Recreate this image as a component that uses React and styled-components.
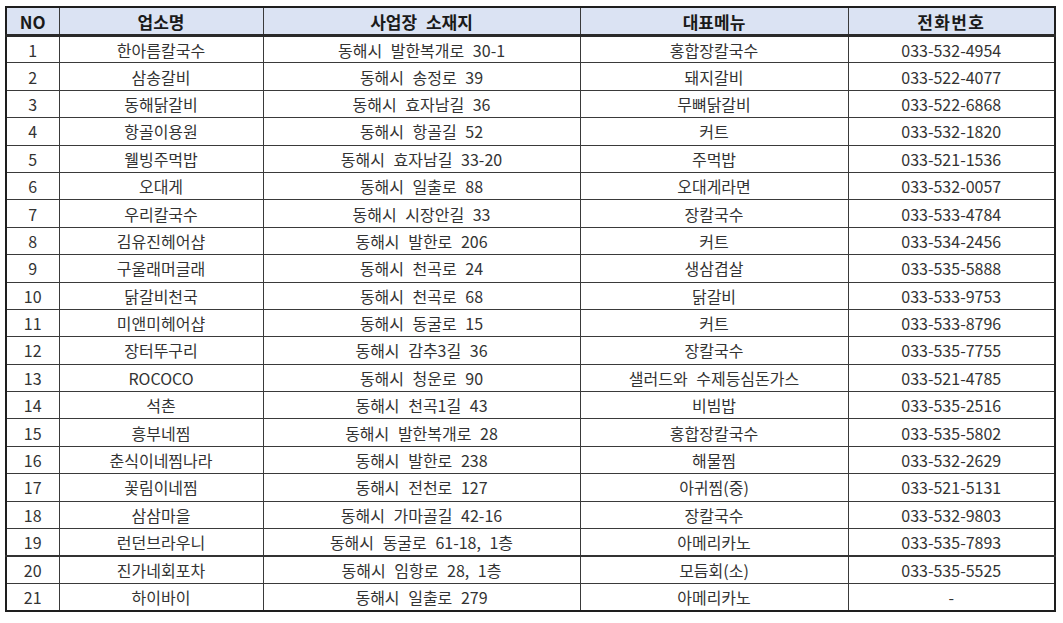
import React from "react";
import styled, { createGlobalStyle } from "styled-components";

const GlobalStyle = createGlobalStyle`
  body {
    margin: 0;
    background: #ffffff;
    font-family: "Noto Sans CJK KR", "Noto Sans", sans-serif;
  }
`;

const Page = styled.div`
  padding: 6px 0 0 5px;
`;

const Table = styled.table`
  width: 1049px;
  border-collapse: collapse;
  table-layout: fixed;
  border: 2px solid #1e1e1e;
  color: #333333;
  font-size: 16px;
`;

const HeadCell = styled.th`
  height: 26px;
  padding: 0;
  background: #dbe3f3;
  border: 1px solid #3a3a3a;
  border-bottom: 3px solid #2a2a2a;
  font-size: 17px;
  font-weight: 700;
  color: #1a1a1a;
  text-align: center;
  line-height: 1;
  word-spacing: 5px;
  letter-spacing: ${(p) => (p.$wide ? "0.08em" : "0")};
`;

const Row = styled.tr`
  height: 27.4px;
  border-top: ${(p) => (p.$thick ? "2px solid #333" : "1px solid #3a3a3a")};
`;

const Cell = styled.td`
  padding: 0;
  border-left: 1px solid #3a3a3a;
  border-right: 1px solid #3a3a3a;
  text-align: center;
  line-height: 1;
  white-space: nowrap;
  word-spacing: 5px;
`;

const columns = [
  { label: "NO", width: 53 },
  { label: "업소명", width: 204 },
  { label: "사업장 소재지", width: 317 },
  { label: "대표메뉴", width: 268 },
  { label: "전화번호", width: 207, wide: true },
];

const shops = [
  ["한아름칼국수", "동해시 발한복개로 30-1", "홍합장칼국수", "033-532-4954"],
  ["삼송갈비", "동해시 송정로 39", "돼지갈비", "033-522-4077"],
  ["동해닭갈비", "동해시 효자남길 36", "무뼈닭갈비", "033-522-6868"],
  ["항골이용원", "동해시 항골길 52", "커트", "033-532-1820"],
  ["웰빙주먹밥", "동해시 효자남길 33-20", "주먹밥", "033-521-1536"],
  ["오대게", "동해시 일출로 88", "오대게라면", "033-532-0057"],
  ["우리칼국수", "동해시 시장안길 33", "장칼국수", "033-533-4784"],
  ["김유진헤어샵", "동해시 발한로 206", "커트", "033-534-2456"],
  ["구울래머글래", "동해시 천곡로 24", "생삼겹살", "033-535-5888"],
  ["닭갈비천국", "동해시 천곡로 68", "닭갈비", "033-533-9753"],
  ["미앤미헤어샵", "동해시 동굴로 15", "커트", "033-533-8796"],
  ["장터뚜구리", "동해시 감추3길 36", "장칼국수", "033-535-7755"],
  ["ROCOCO", "동해시 청운로 90", "샐러드와 수제등심돈가스", "033-521-4785"],
  ["석촌", "동해시 천곡1길 43", "비빔밥", "033-535-2516"],
  ["흥부네찜", "동해시 발한복개로 28", "홍합장칼국수", "033-535-5802"],
  ["춘식이네찜나라", "동해시 발한로 238", "해물찜", "033-532-2629"],
  ["꽃림이네찜", "동해시 전천로 127", "아귀찜(중)", "033-521-5131"],
  ["삼삼마을", "동해시 가마골길 42-16", "장칼국수", "033-532-9803"],
  ["런던브라우니", "동해시 동굴로 61-18, 1층", "아메리카노", "033-535-7893"],
  ["진가네회포차", "동해시 임항로 28, 1층", "모듬회(소)", "033-535-5525"],
  ["하이바이", "동해시 일출로 279", "아메리카노", "-"],
];

export default function App() {
  return (
    <Page>
      <GlobalStyle />
      <Table>
        <colgroup>
          {columns.map((c) => (
            <col key={c.label} style={{ width: c.width }} />
          ))}
        </colgroup>
        <thead>
          <tr>
            {columns.map((c) => (
              <HeadCell key={c.label} $wide={c.wide}>{c.label}</HeadCell>
            ))}
          </tr>
        </thead>
        <tbody>
          {shops.map((s, i) => (
            <Row key={i} $thick={i === 19}>
              <Cell>{i + 1}</Cell>
              <Cell>{s[0]}</Cell>
              <Cell>{s[1]}</Cell>
              <Cell>{s[2]}</Cell>
              <Cell>{s[3]}</Cell>
            </Row>
          ))}
        </tbody>
      </Table>
    </Page>
  );
}
